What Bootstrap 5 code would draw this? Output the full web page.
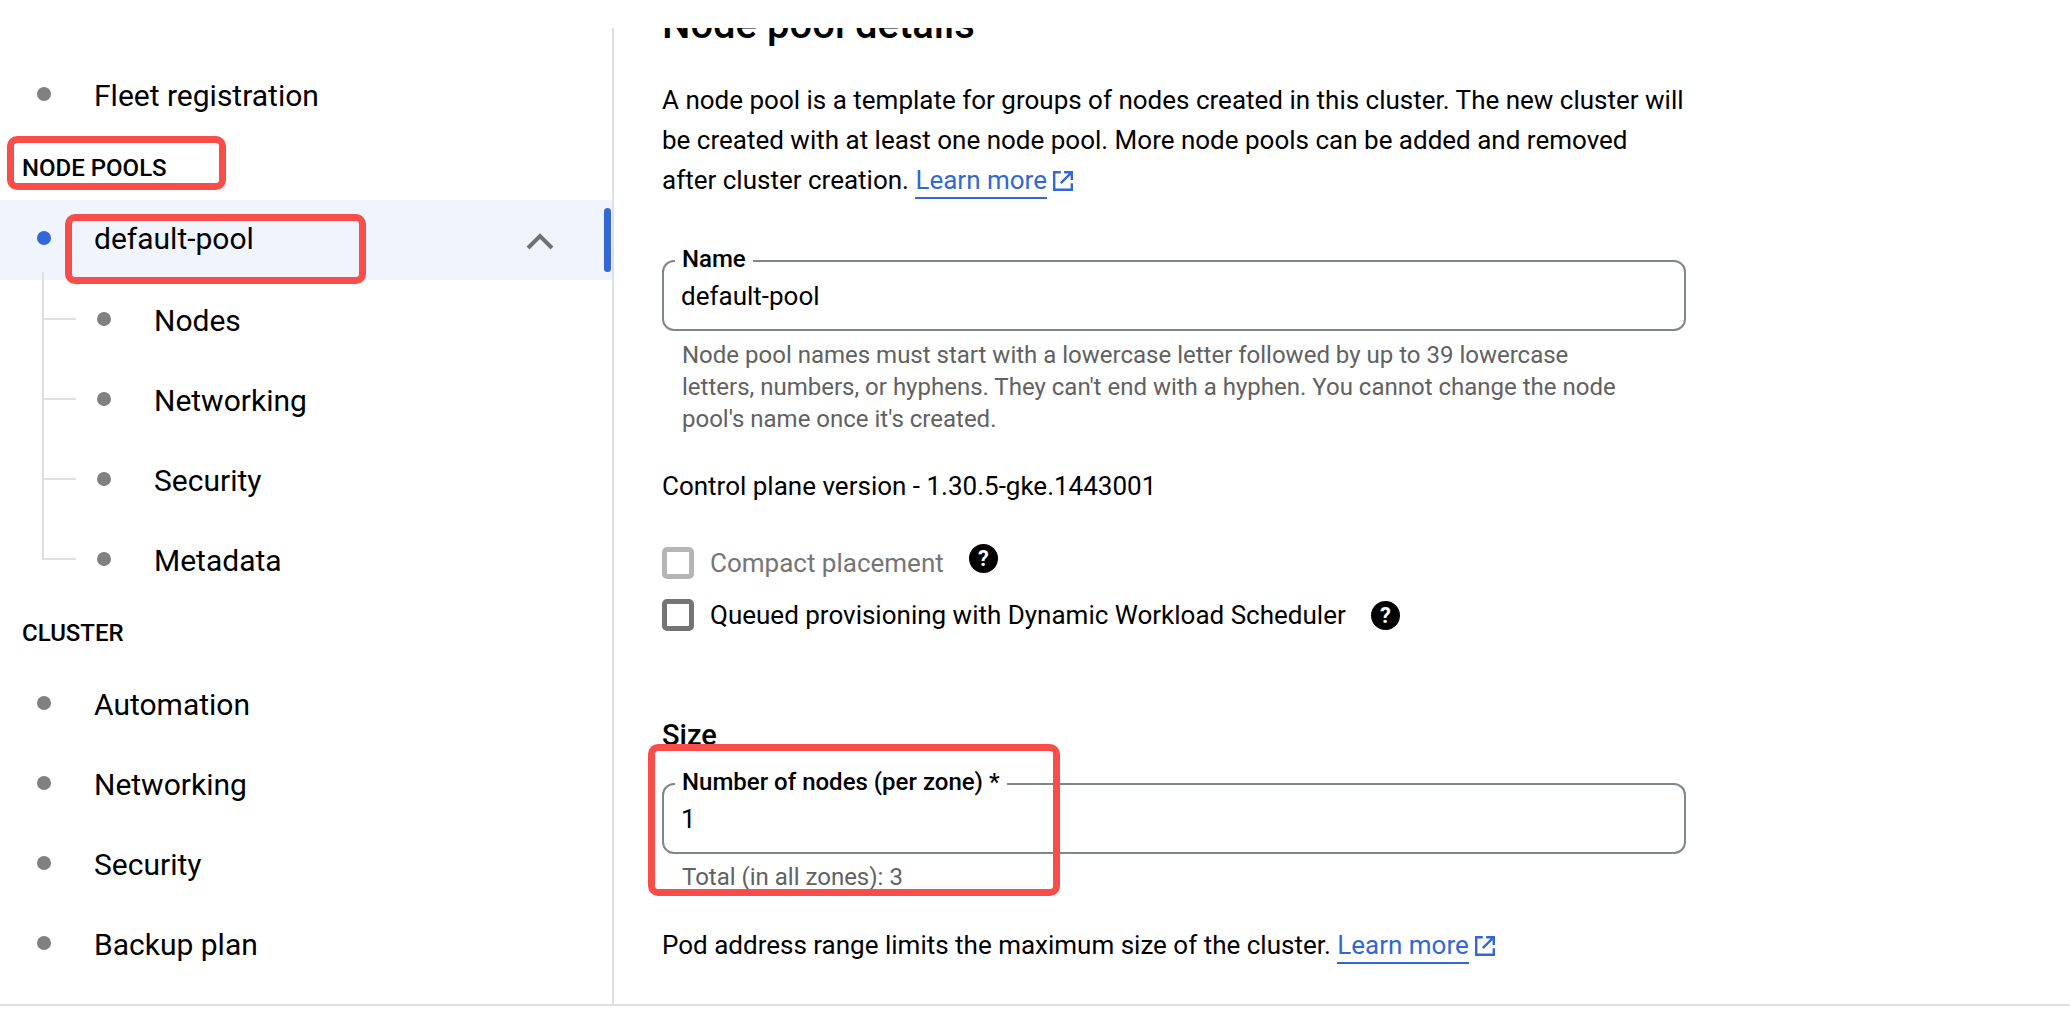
<!DOCTYPE html>
<html lang="en">
<head>
<meta charset="utf-8">
<title>Node pool details</title>
<link href="https://cdn.jsdelivr.net/npm/bootstrap@5.3.0/dist/css/bootstrap.min.css" rel="stylesheet">
<style>
html,body{height:100%;overflow:hidden;background:#fff}
body{font-family:Roboto,"Liberation Sans",sans-serif;color:#000;font-size:26px;line-height:40px}
.shell{position:relative;height:1024px;overflow:hidden}
.top-gap{height:28px}
.work{height:978px;border-bottom:2px solid #e0e0e0}
.side{width:614px;flex:none;border-right:2px solid #e0e0e0;padding-top:27px}
.nav-row{height:80px;display:flex;align-items:center;padding-left:37px;position:relative;font-size:30px}
.nav-row .dot{width:14px;height:14px;border-radius:50%;background:#808080;flex:none;margin-right:43px;margin-top:-2px}
.nav-row .lbl{margin-top:1px}
.nav-row.sub{padding-left:97px}
.nav-row.sub::before{content:"";position:absolute;left:42px;top:-8px;height:48px;width:34px;border-left:2px solid #e0e0e0;border-bottom:2px solid #e0e0e0}
.nav-row.sub:not(.first)::before{top:-40px;height:80px}
.nav-row.sel{background:#f0f4fc}
.nav-row.sel .dot{background:#3367d6;margin-top:-4px}
.nav-row.sel .lbl{margin-top:-2px}
.chev{position:absolute;left:526px;top:32px}
.ind{position:absolute;left:604px;top:8px;width:7px;height:64px;background:#3367d6;border-radius:4px}
.sec-h{font-weight:500;font-size:24px;padding-left:22px;display:flex;align-items:center}
.sec-a{height:65px}
.sec-b{height:64px;padding-top:1px}
.main-pane{flex:1;overflow:hidden;padding-left:48px}
.body-col{width:1024px}
.title{font-size:40px;font-weight:500;line-height:48px;margin:-27px 0 0;height:48px}
.intro{margin:31px 0 0;font-size:26px}
a.lnk{color:#3367d6;text-decoration:none;border-bottom:2px solid #3367d6;display:inline-block;line-height:34px}
.ext{vertical-align:-3px;margin-left:5px}
.fld{position:relative;height:71px}
.fld input{height:71px;border:2px solid #80868b;border-radius:12px;padding:0 17px;font-size:26px;color:#000;background:#fff;font-family:inherit;box-shadow:none}
.fld label{position:absolute;left:13px;top:-20px;background:#fff;padding:0 7px;font-weight:500;font-size:24px;line-height:38px;height:33px}
.f1{margin-top:60px}
.hint{color:#616161;font-size:24px;line-height:32px;padding-left:20px;width:970px}
.h1t{margin-top:8px}
.cb{width:32px;height:32px;border:5px solid #757575;border-radius:5px;flex:none;background:#fff;appearance:none;margin:0}
.cb:disabled{border-color:#b5b5b5}
.dim{color:#757575}
.hlp{flex:none}
.size-h{font-weight:500;font-size:29px;line-height:36px;margin:86px 0 0}
.ctl-ver{margin-top:31px}
.chk1{margin-top:41px;height:32px}
.chk2{margin-top:20px;height:32px}
.cb-t{margin-left:16px}
.chk1 .hlp{margin-left:25px;margin-top:-10px}
.chk2 .hlp{margin-left:25px}
.f2{margin-top:30px}
.tot{margin-top:7px}
.pod{margin-top:32px}
.mark-box{position:absolute;border:7px solid #f94d4a;border-radius:10px;pointer-events:none}
.mb1{left:7px;top:136px;width:219px;height:54px}
.mb2{left:65px;top:214px;width:301px;height:70px}
.mb3{left:648px;top:744px;width:412px;height:152px}
</style>
</head>
<body>
<div class="shell">
  <div class="top-gap"></div>
  <div class="work d-flex">
    <nav class="side">
      <div class="nav-row"><span class="dot"></span><span class="lbl">Fleet registration</span></div>
      <div class="sec-h sec-a">NODE POOLS</div>
      <div class="nav-row sel"><span class="dot"></span><span class="lbl">default-pool</span>
        <svg class="chev" width="28" height="18" viewBox="0 0 28 18"><path d="M2 16 14 4l12 12" fill="none" stroke="#6f7377" stroke-width="4"/></svg>
        <span class="ind"></span></div>
      <div class="nav-row sub first"><span class="dot"></span><span class="lbl">Nodes</span></div>
      <div class="nav-row sub"><span class="dot"></span><span class="lbl">Networking</span></div>
      <div class="nav-row sub"><span class="dot"></span><span class="lbl">Security</span></div>
      <div class="nav-row sub"><span class="dot"></span><span class="lbl">Metadata</span></div>
      <div class="sec-h sec-b">CLUSTER</div>
      <div class="nav-row"><span class="dot"></span><span class="lbl">Automation</span></div>
      <div class="nav-row"><span class="dot"></span><span class="lbl">Networking</span></div>
      <div class="nav-row"><span class="dot"></span><span class="lbl">Security</span></div>
      <div class="nav-row"><span class="dot"></span><span class="lbl">Backup plan</span></div>
    </nav>
    <main class="main-pane">
      <div class="body-col">
        <h1 class="title">Node pool details</h1>
        <p class="intro">A node pool is a template for groups of nodes created in this cluster. The new cluster will<br>be created with at least one node pool. More node pools can be added and removed<br>after cluster creation. <a class="lnk" href="#">Learn more</a><svg class="ext" width="22" height="22" viewBox="0 0 20 20"><path d="M8 2H2v16h16v-6M11 2h7v7M18 2 8 12" fill="none" stroke="#3367d6" stroke-width="2.2"/></svg></p>
        <div class="fld f1"><label for="n1">Name</label><input id="n1" class="form-control" value="default-pool"></div>
        <div class="hint h1t">Node pool names must start with a lowercase letter followed by up to 39 lowercase letters, numbers, or hyphens. They can't end with a hyphen. You cannot change the node pool's name once it's created.</div>
        <div class="ctl-ver">Control plane version - 1.30.5-gke.1443001</div>
        <div class="d-flex align-items-center chk1"><input type="checkbox" class="cb" disabled><span class="dim cb-t">Compact placement</span><svg class="hlp" width="29" height="29" viewBox="0 0 28 28"><circle cx="14" cy="14" r="14"/><text x="14" y="21.5" text-anchor="middle" fill="#fff" font-size="21" font-weight="700" font-family="Roboto">?</text></svg></div>
        <div class="d-flex align-items-center chk2"><input type="checkbox" class="cb"><span class="cb-t">Queued provisioning with Dynamic Workload Scheduler</span><svg class="hlp" width="29" height="29" viewBox="0 0 28 28"><circle cx="14" cy="14" r="14"/><text x="14" y="21.5" text-anchor="middle" fill="#fff" font-size="21" font-weight="700" font-family="Roboto">?</text></svg></div>
        <h2 class="size-h">Size</h2>
        <div class="fld f2"><label for="n2">Number of nodes (per zone) *</label><input id="n2" class="form-control" value="1"></div>
        <div class="hint tot">Total (in all zones): 3</div>
        <div class="pod">Pod address range limits the maximum size of the cluster. <a class="lnk" href="#">Learn more</a><svg class="ext" width="22" height="22" viewBox="0 0 20 20"><path d="M8 2H2v16h16v-6M11 2h7v7M18 2 8 12" fill="none" stroke="#3367d6" stroke-width="2.2"/></svg></div>
      </div>
    </main>
  </div>
  <div class="mark-box mb1"></div>
  <div class="mark-box mb2"></div>
  <div class="mark-box mb3"></div>
</div>
<script src="https://cdn.jsdelivr.net/npm/bootstrap@5.3.0/dist/js/bootstrap.bundle.min.js"></script>
</body>
</html>
